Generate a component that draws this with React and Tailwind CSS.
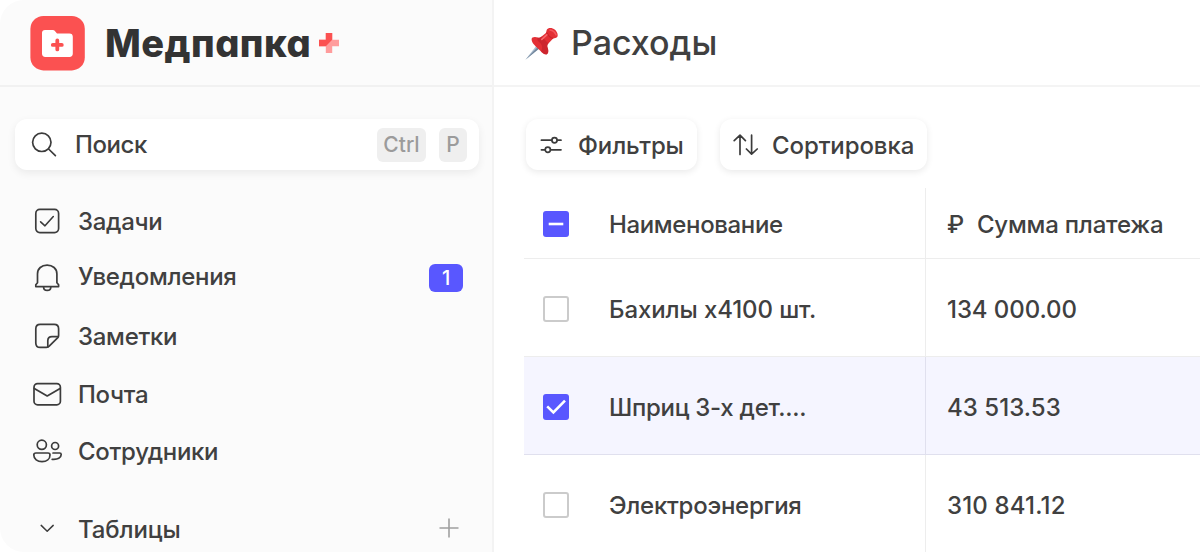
import React from "react";

const stroke = {
  fill: "none",
  stroke: "#3c3c3c",
  strokeWidth: 1.7,
  strokeLinecap: "round",
  strokeLinejoin: "round",
};

function Icon({ children, className = "", ...rest }) {
  return (
    <svg width="32" height="32" viewBox="0 0 32 32" className={"block shrink-0 " + className} {...stroke} {...rest}>
      {children}
    </svg>
  );
}

const TaskIcon = () => (
  <Icon>
    <rect x="4.8" y="3.4" width="22.8" height="23.2" rx="4" />
    <path d="M9.6 15.8 L14 19.8 L22.3 10.5" strokeWidth="1.6" />
  </Icon>
);

const BellIcon = () => (
  <Icon>
    <path d="M4.8 25.6 V23.8 L6.5 21.8 V13 C6.5 7.4 10.6 4.2 16.1 4.2 S25.9 7.4 25.9 13 V21.8 L27.6 23.8 V25.6 Z" />
    <path d="M12.6 26 C12.6 30.6 19.8 30.6 19.8 26" />
  </Icon>
);

const NoteIcon = () => (
  <Icon>
    <path d="M9.2 3.4 H23.2 Q27.6 3.4 27.6 7.8 V14.4 Q27.6 15.6 26.8 16.6 L18.2 25.2 Q17 26.4 15.4 26.4 H9.2 Q4.8 26.4 4.8 22 V7.8 Q4.8 3.4 9.2 3.4 Z" />
    <path d="M16.8 26 V19.8 Q16.8 15.6 21 15.6 H27.2" />
  </Icon>
);

const MailIcon = () => (
  <Icon>
    <rect x="3" y="4.6" width="26.4" height="21.2" rx="3.6" />
    <path d="M3.3 9.4 L16.2 17 L29.1 9.4" />
  </Icon>
);

const PeopleIcon = () => (
  <Icon>
    <circle cx="10.8" cy="8.8" r="4.6" />
    <circle cx="24.1" cy="10" r="3.5" />
    <path d="M5 17 H17 Q19 17 19 19 C19 23 15.6 25.6 11 25.6 S2.8 23 2.8 19 Q2.8 17 5 17 Z" />
    <path d="M22 17 H28.6 Q30.2 17 30.2 18.6 C30.2 21.8 26.8 23.8 21.2 23.3" />
  </Icon>
);

function NavItem({ icon, label, height, badge }) {
  return (
    <div className={"flex items-center pl-[31px] pr-[29px] " + height}>
      {icon}
      <span className="ml-[15px] text-[24px] leading-[30px]">{label}</span>
      {badge && (
        <span className="mt-[2px] ml-auto flex h-[28px] w-[34px] items-center justify-center rounded-[6px] bg-[#5957ff] text-[20px] font-medium text-white">
          {badge}
        </span>
      )}
    </div>
  );
}

function Sidebar() {
  return (
    <aside className="flex w-[494px] shrink-0 flex-col border-r-2 border-[#f3f3f3] bg-[#fbfbfb]">
      <div className="flex h-[87px] shrink-0 items-center border-b-2 border-[#f1f1f1] pt-px pl-[30px]">
        <svg width="55" height="55" viewBox="0 0 55 55" className="block shrink-0">
          <rect x="0.4" width="54.4" height="54.4" rx="13" fill="#fb5151" />
          <path
            d="M12 17 Q12 14 15 14 H22.5 Q24.3 14 25.3 15.4 L27 17.4 H39.4 Q42.8 17.4 42.8 20.8 V37.6 Q42.8 41 39.4 41 H15.4 Q12 41 12 37.6 Z"
            fill="#fff"
          />
          <path d="M27.3 24.4 V33.4 M22.8 28.9 H31.8" stroke="#fb5151" strokeWidth="3.8" strokeLinecap="round" />
        </svg>
        <span className="ml-[20px] text-[38px] leading-[46px] font-extrabold tracking-[0.45px] text-[#333] [font-feature-settings:'cv11']">
          Медпапка
        </span>
        <svg width="20" height="20" viewBox="0 0 20 20" className="ml-[8px] block shrink-0">
          <path d="M6.8 0 H13.2 V6.8 H20 V13.2 H13.2 V20 H6.8 V13.2 H0 V6.8 H6.8 Z" fill="#ff9c9c" />
          <path d="M6.8 0 H13.2 V6.8 L6.8 13.2 H0 V6.8 H6.8 Z" fill="#fb5151" />
        </svg>
      </div>

      <div className="mt-[32px] mr-[13px] ml-[15px] flex h-[51px] shrink-0 items-center rounded-[12px] bg-white pr-[12px] pl-[14px] shadow-[0_3px_8px_rgba(0,0,0,0.07)]">
        <Icon>
          <circle cx="12.8" cy="13.3" r="9.2" />
          <path d="M19.6 20 L26.4 26.7" />
        </Icon>
        <span className="ml-[14px] text-[24px] leading-[30px] tracking-[-0.4px]">Поиск</span>
        <span className="ml-auto flex h-[34px] w-[49px] items-center justify-center rounded-[6px] bg-[#efefef] text-[21px] text-[#9b9b9b]">
          Ctrl
        </span>
        <span className="ml-[13px] flex h-[34px] w-[28px] items-center justify-center rounded-[6px] bg-[#efefef] text-[21px] text-[#9b9b9b]">
          P
        </span>
      </div>

      <nav className="mt-[24px] flex flex-col tracking-[-0.28px]">
        <NavItem icon={<TaskIcon />} label="Задачи" height="h-[55px]" />
        <NavItem icon={<BellIcon />} label="Уведомления" height="h-[56px]" badge="1" />
        <NavItem icon={<NoteIcon />} label="Заметки" height="h-[63px]" />
        <NavItem icon={<MailIcon />} label="Почта" height="h-[53px]" />
        <NavItem icon={<PeopleIcon />} label="Сотрудники" height="h-[61px]" />
      </nav>

      <div className="mt-[31px] flex h-[30px] items-center pr-[33px] pl-[31px]">
        <Icon strokeWidth="1.5">
          <path d="M10.2 13.4 L16.2 19.2 L22.2 13.4" />
        </Icon>
        <span className="ml-[15px] pt-[3px] text-[24px] leading-[30px] tracking-[-0.1px]">Таблицы</span>
        <svg width="20" height="20" viewBox="0 0 20 20" className="ml-auto block" stroke="#a0a0a0" strokeWidth="1.6">
          <path d="M10 0.5 V19.5 M0.5 10 H19.5" />
        </svg>
      </div>
    </aside>
  );
}

function PinIcon() {
  return (
    <svg width="36" height="36" viewBox="0 0 36 36" className="block shrink-0">
      <path d="M1.4 34.8 L12.6 20.4 L15.6 23.2 Z" fill="#a9bccf" />
      <path d="M1.4 34.8 L14 21.8 L15.6 23.2 Z" fill="#71859a" />
      <path
        d="M7.6 14.4 C7.4 11.8 11 11.4 13.8 12.4 C15.4 13 16.4 12.6 17.6 11.6 L21.6 8.2 C22.6 7.2 22.2 6.2 22.8 4.8 C24 2.4 28 2.2 31 4.8 C33.8 7.4 34.6 11.4 32.6 12.6 C31 13.6 29.6 13 28.4 14.2 L24.4 18.6 C23.2 20 23 21 23.6 22.6 C24.6 25.4 24.8 29 22.4 29.4 C19.4 29.6 16.8 26.2 14 23.4 C11 20.6 7.8 18 7.6 14.4 Z"
        fill="#e32f35"
      />
      <path
        d="M17.6 11.6 C19.6 13.8 21.8 16 24.4 18.6 C23.2 20 23 21 23.6 22.6 C24.6 25.4 24.8 29 22.4 29.4 C20.6 29.4 18.8 28.2 17 26.4 C19 23.4 18.4 19.4 15.4 17.2 C13.4 15.8 12.8 14.2 13.8 12.4 C15.4 13 16.4 12.6 17.6 11.6 Z"
        fill="#b81c27"
        opacity="0.5"
      />
      <path d="M22.6 7.4 C24 10.4 26.4 12.6 29.2 13.4" stroke="#b81c27" strokeWidth="1.2" fill="none" opacity="0.6" />
      <path d="M17.8 14.4 L22.8 9.8" stroke="#f7686c" strokeWidth="1.6" strokeLinecap="round" />
      <path d="M26 5 C28.8 5.4 31 7.2 32 9.8" stroke="#f4565b" strokeWidth="1.6" fill="none" strokeLinecap="round" />
    </svg>
  );
}

function Checkbox({ state }) {
  if (state === "off") {
    return <span className="mt-[2px] block size-[26px] rounded-[3px] border-2 border-[#cbcbcb] bg-white" />;
  }
  return (
    <span className="mt-[2px] block size-[26px] rounded-[3px] bg-[#5957ff]">
      <svg width="26" height="26" viewBox="0 0 26 26" fill="none" stroke="#fff" strokeWidth="2.6" className="block">
        {state === "mixed" ? <path d="M5.7 13 H20.3" /> : <path d="M4.2 12.4 L10.4 18.4 L22 6.6" />}
      </svg>
    </span>
  );
}

function Row({ state, name, amount, height, tone, nameSpacing, amountSpacing }) {
  return (
    <div className={"flex shrink-0 border-b " + height + " " + tone}>
      <div className="flex w-[402px] shrink-0 items-center border-r border-inherit pl-[19px]">
        <Checkbox state={state} />
        <span className={"ml-[40px] pt-[4px] text-[24px] leading-[30px] " + nameSpacing}>{name}</span>
      </div>
      <div className={"flex items-center pt-[4px] pl-[21px] text-[24px] leading-[30px] whitespace-pre " + amountSpacing}>
        {amount}
      </div>
    </div>
  );
}

function Main() {
  return (
    <main className="flex min-w-0 flex-1 flex-col overflow-hidden bg-white">
      <div className="flex h-[87px] shrink-0 items-center border-b-2 border-[#f4f4f4] pl-[30px]">
        <PinIcon />
        <span className="ml-[11px] text-[34px] leading-[42px]">Расходы</span>
      </div>
      <div className="flex shrink-0 gap-[23px] pt-[32px] pl-[32px]">
        <button className="flex h-[51px] w-[171px] items-center rounded-[12px] bg-white pl-[14px] shadow-[0_2px_7px_rgba(0,0,0,0.09)]">
          <svg width="22" height="20" viewBox="0 0 22 20" className="block shrink-0" {...stroke}>
            <path d="M1.4 5.2 H11.6 M17.4 5.2 H21 M1.4 14.8 H5 M10.6 14.8 H21" />
            <circle cx="14.5" cy="5.2" r="2.6" />
            <circle cx="7.8" cy="14.8" r="2.6" />
          </svg>
          <span className="ml-[16px] pt-[2px] text-[24px] leading-[30px] tracking-[-0.1px]">Фильтры</span>
        </button>
        <button className="flex h-[51px] w-[207px] items-center rounded-[12px] bg-white pl-[13px] shadow-[0_2px_7px_rgba(0,0,0,0.09)]">
          <svg width="26" height="22" viewBox="0 0 26 22" className="block shrink-0" {...stroke}>
            <path d="M7 20.4 V1.5 M1.2 6.6 L7 1.2 L12.4 6.6 M18.6 1.2 V20 M13.4 15 L18.6 20.2 L24.2 15" />
          </svg>
          <span className="ml-[13px] pt-[2px] text-[24px] leading-[30px] tracking-[-0.1px]">Сортировка</span>
        </button>
      </div>
      <div className="mt-[18px] ml-[30px] flex flex-col">
        <Row
          state="mixed"
          name="Наименование"
          amount={
            <>
              <span>₽</span>
              <span className="ml-[13px]">Сумма платежа</span>
            </>
          }
          height="h-[71px]"
          tone="border-[#ededed]"
          nameSpacing="tracking-[-0.36px]"
          amountSpacing="tracking-[-0.22px]"
        />
        <Row
          state="off"
          name="Бахилы х4100 шт."
          amount="134 000.00"
          height="h-[98px]"
          tone="border-[#ededed]"
          nameSpacing="tracking-[-0.1px]"
          amountSpacing="tracking-[-0.08px]"
        />
        <Row
          state="on"
          name="Шприц 3-х дет...."
          amount="43 513.53"
          height="h-[98px]"
          tone="border-[#e0e0ee] bg-[#f5f5ff]"
          nameSpacing="tracking-[-0.28px]"
          amountSpacing="tracking-[0.04px]"
        />
        <Row
          state="off"
          name="Электроэнергия"
          amount="310 841.12"
          height="h-[98px]"
          tone="border-[#ededed]"
          nameSpacing="tracking-[-0.26px]"
          amountSpacing="tracking-[0.16px]"
        />
      </div>
    </main>
  );
}

export default function App() {
  return (
    <div className="h-[552px] w-[1200px] overflow-hidden bg-white font-['Inter',sans-serif] font-[450] text-[#404040]">
      <div className="flex h-full overflow-hidden rounded-l-[24px]">
        <Sidebar />
        <Main />
      </div>
    </div>
  );
}
